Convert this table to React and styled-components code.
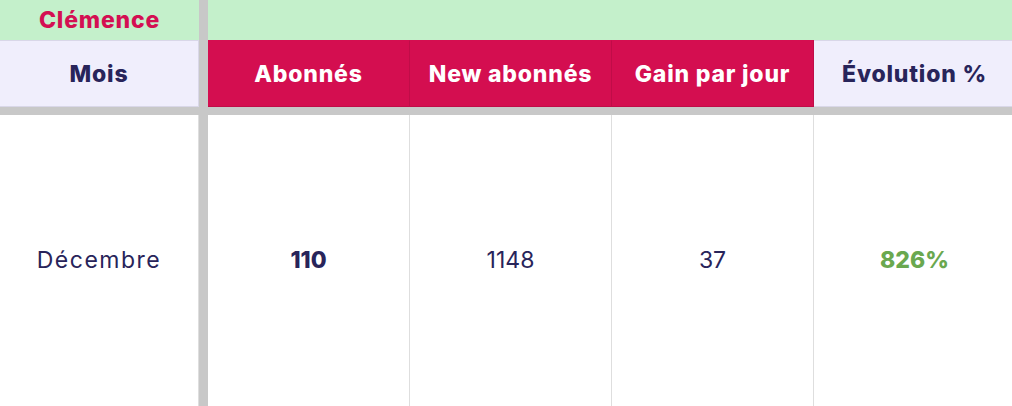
import React from "react";
import styled, { createGlobalStyle } from "styled-components";

const GlobalStyle = createGlobalStyle`
  html, body {
    margin: 0;
    padding: 0;
    background: #ffffff;
    overflow: hidden;
  }
  body {
    font-family: "Inter", "Noto Sans", sans-serif;
  }
`;

const Sheet = styled.div`
  display: grid;
  grid-template-columns: 199px 9px repeat(4, 202px);
  grid-template-rows: 40px 67px 8px 291px;
  width: 1012px;
  overflow: hidden;
  background: #c8c8c8;
`;

const Cell = styled.div`
  grid-column: ${({ $col }) => $col};
  grid-row: ${({ $row }) => $row};
  display: flex;
  align-items: center;
  justify-content: center;
  box-sizing: border-box;
  font-size: 23px;
  white-space: nowrap;
`;

const TitleCell = styled(Cell)`
  background: #c4f0cb;
  color: #d40f52;
  font-weight: 800;
  letter-spacing: 0.8px;
`;

const HeadCell = styled(Cell)`
  font-weight: 800;
  letter-spacing: 0.8px;
  background: ${({ $accent }) => ($accent ? "#d40e50" : "#f0eefc")};
  color: ${({ $accent }) => ($accent ? "#ffffff" : "#28245a")};
  border-right: 1px solid ${({ $accent }) => ($accent ? "#c00c48" : "#d9d7e8")};
  border-top: 1px solid ${({ $accent }) => ($accent ? "#d40e50" : "#d9d7e8")};
  border-bottom: 1px solid ${({ $accent }) => ($accent ? "#c00c48" : "#d9d7e8")};
  padding-top: 1px;
`;

const DataCell = styled(Cell)`
  background: #ffffff;
  color: ${({ $tone }) => ($tone === "green" ? "#6aa84f" : "#28245a")};
  font-weight: ${({ $bold }) => ($bold ? 800 : 400)};
  border-right: 1px solid #dedede;
  padding-bottom: 1px;
`;

const MonthCell = styled(DataCell)`
  letter-spacing: 1.5px;
`;

const headers = [
  { label: "Abonnés", accent: true },
  { label: "New abonnés", accent: true },
  { label: "Gain par jour", accent: true },
  { label: "Évolution %", accent: false },
];

const row = [
  { value: "110", bold: true },
  { value: "1148" },
  { value: "37" },
  { value: "826%", bold: true, tone: "green" },
];

export default function App() {
  return (
    <>
      <GlobalStyle />
      <Sheet>
        <TitleCell $col="1" $row="1">Clémence</TitleCell>
        <TitleCell $col="3 / 7" $row="1" />

        <HeadCell $col="1" $row="2">Mois</HeadCell>
        {headers.map((h, i) => (
          <HeadCell key={h.label} $col={String(i + 3)} $row="2" $accent={h.accent}>
            {h.label}
          </HeadCell>
        ))}

        <MonthCell $col="1" $row="4">Décembre</MonthCell>
        {row.map((c, i) => (
          <DataCell key={i} $col={String(i + 3)} $row="4" $bold={c.bold} $tone={c.tone}>
            {c.value}
          </DataCell>
        ))}
      </Sheet>
    </>
  );
}
